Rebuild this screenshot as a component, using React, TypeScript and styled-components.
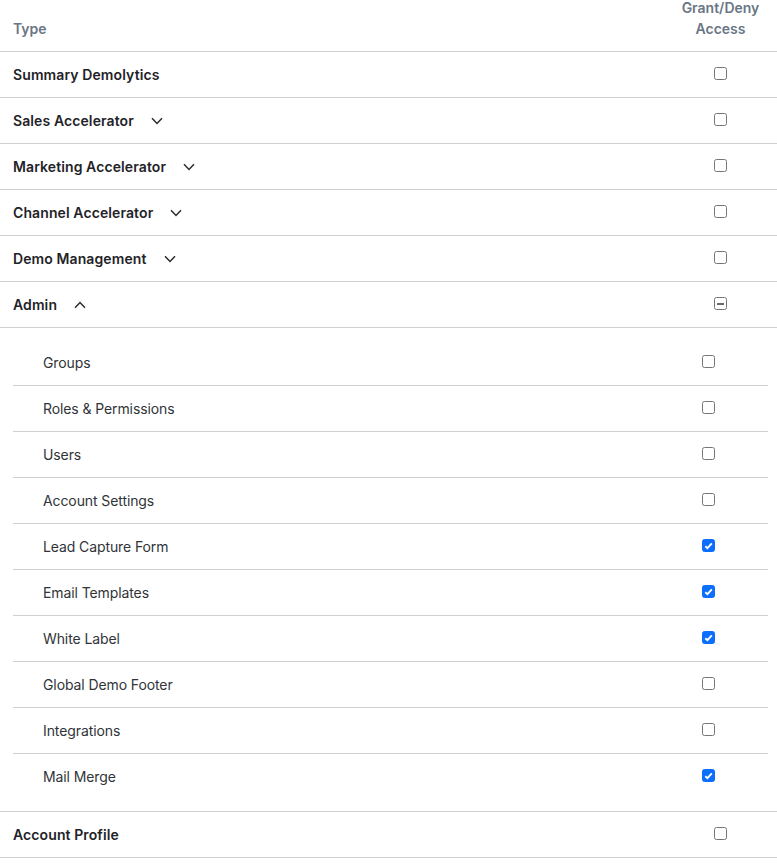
import React from "react";
import styled, { createGlobalStyle } from "styled-components";

const Global = createGlobalStyle`
  html, body { margin: 0; padding: 0; background: #fff; }
  body { font-family: Inter, "Noto Sans", "Liberation Sans", sans-serif; -webkit-font-smoothing: antialiased; }
`;

const Table = styled.div`
  width: 777px;
`;

const HeaderRow = styled.div`
  display: flex;
  align-items: flex-end;
  box-sizing: border-box;
  height: 52px;
  padding-bottom: 12px;
  border-bottom: 1px solid #cfcfcf;
`;

const HeadCell = styled.div<{ $center?: boolean }>`
  ${(p) => (p.$center ? "width: 113px; flex: none;" : "flex: 1; padding-left: 13px;")}
  font-size: 14px;
  font-weight: 600;
  line-height: 21px;
  color: #6a7685;
  text-align: ${(p) => (p.$center ? "center" : "left")};
`;

const Row = styled.div`
  display: grid;
  grid-template-columns: 1fr 113px;
  align-items: center;
  height: 45px;
  border-bottom: 1px solid #cfcfcf;
`;

const Label = styled.div`
  display: flex;
  align-items: center;
  gap: 17px;
  padding-left: 13px;
  font-size: 14px;
  font-weight: 600;
  letter-spacing: 0.1px;
  color: #1f2328;
`;

const CheckCell = styled.div`
  display: flex;
  justify-content: center;
  align-items: center;
  padding-bottom: 2px;
`;

const Nested = styled.div`
  padding: 12px 9px 12px 13px;
  border-bottom: 1px solid #cfcfcf;
`;

const SubRow = styled.div<{ $last?: boolean }>`
  display: grid;
  grid-template-columns: 1fr 119px;
  align-items: center;
  height: 45px;
  border-bottom: ${(p) => (p.$last ? "none" : "1px solid #cfcfcf")};
`;

const SubLabel = styled.div`
  padding-left: 30px;
  font-size: 14px;
  font-weight: 400;
  letter-spacing: -0.1px;
  color: #303438;
`;

const Box = styled.span<{ $state: "off" | "on" | "mixed" }>`
  box-sizing: border-box;
  width: 13px;
  height: 13px;
  border-radius: 2.5px;
  display: inline-flex;
  align-items: center;
  justify-content: center;
  border: 1px solid ${(p) => (p.$state === "on" ? "#0b6efd" : "#767676")};
  background: ${(p) => (p.$state === "on" ? "#0b6efd" : "#fff")};
`;

const Chevron = ({ up }: { up?: boolean }) => (
  <svg width="12" height="8" viewBox="0 0 12 8" style={{ display: "block" }}>
    <polyline
      points={up ? "1,6.8 6,1.5 11,6.8" : "1,1.2 6,6.5 11,1.2"}
      fill="none"
      stroke="#2b2b2b"
      strokeWidth="1.5"
    />
  </svg>
);

const Check = ({ state }: { state: "off" | "on" | "mixed" }) => (
  <Box $state={state}>
    {state === "on" && (
      <svg width="9" height="8" viewBox="0 0 9 8">
        <polyline points="1.3,4.2 3.4,6.2 7.8,1.3" fill="none" stroke="#fff" strokeWidth="1.9" />
      </svg>
    )}
    {state === "mixed" && <svg width="7" height="2" viewBox="0 0 7 2"><rect width="7" height="2" fill="#6a6a6a" /></svg>}
  </Box>
);

type Top = { name: string; chevron?: "down" | "up"; state: "off" | "on" | "mixed" };

const tops: Top[] = [
  { name: "Summary Demolytics", state: "off" },
  { name: "Sales Accelerator", chevron: "down", state: "off" },
  { name: "Marketing Accelerator", chevron: "down", state: "off" },
  { name: "Channel Accelerator", chevron: "down", state: "off" },
  { name: "Demo Management", chevron: "down", state: "off" },
  { name: "Admin", chevron: "up", state: "mixed" },
];

const subs: [string, boolean][] = [
  ["Groups", false],
  ["Roles & Permissions", false],
  ["Users", false],
  ["Account Settings", false],
  ["Lead Capture Form", true],
  ["Email Templates", true],
  ["White Label", true],
  ["Global Demo Footer", false],
  ["Integrations", false],
  ["Mail Merge", true],
];

export default function App() {
  return (
    <>
      <Global />
      <Table>
        <HeaderRow>
          <HeadCell>Type</HeadCell>
          <HeadCell $center>
            Grant/Deny
            <br />
            Access
          </HeadCell>
        </HeaderRow>
        {tops.map((t) => (
          <Row key={t.name}>
            <Label>
              {t.name}
              {t.chevron && <Chevron up={t.chevron === "up"} />}
            </Label>
            <CheckCell>
              <Check state={t.state} />
            </CheckCell>
          </Row>
        ))}
        <Nested>
          {subs.map(([n, c], i) => (
            <SubRow key={n} $last={i === subs.length - 1}>
              <SubLabel>{n}</SubLabel>
              <CheckCell>
                <Check state={c ? "on" : "off"} />
              </CheckCell>
            </SubRow>
          ))}
        </Nested>
        <Row>
          <Label>Account Profile</Label>
          <CheckCell>
            <Check state="off" />
          </CheckCell>
        </Row>
      </Table>
    </>
  );
}
